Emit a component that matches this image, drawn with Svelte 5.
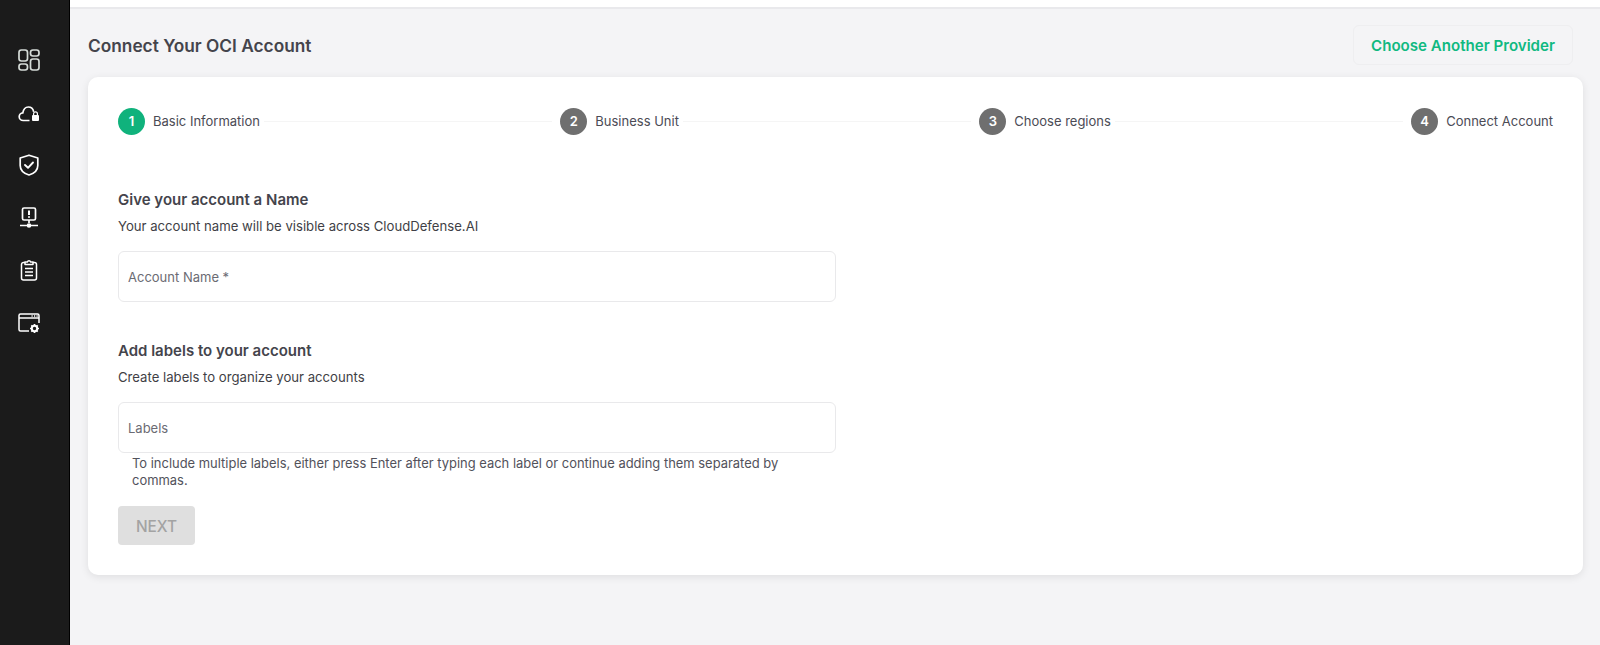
<script>
  const steps = [
    { n: 1, label: 'Basic Information', active: true },
    { n: 2, label: 'Business Unit' },
    { n: 3, label: 'Choose regions' },
    { n: 4, label: 'Connect Account' }
  ];
</script>

<div class="app">
  <nav class="rail">
    <svg class="ico" viewBox="0 0 22 22" fill="none" stroke="#d5dcd8" stroke-width="1.7">
      <rect x="1" y="1" width="8.5" height="11" rx="2.4" />
      <rect x="12.5" y="1" width="8.500" height="6" rx="2.400" />
      <rect x="1" y="15" width="8.500" height="6" rx="2.400" />
      <rect x="12.500" y="10" width="8.500" height="11" rx="2.400" />
    </svg>
    <svg class="ico" viewBox="0 0 22 22" fill="none" stroke="#fff" stroke-width="1.700">
      <path d="M11.500 18.500H5.200C3 18.500 1.200 16.800 1.200 14.700c0-2 1.600-3.700 3.600-3.800C5.400 7.600 7.600 5 10.300 5c2.600 0 4.800 1.800 5.400 4.800" />
      <rect x="14" y="13" width="7" height="6" rx="1" fill="#fff" stroke="none" />
      <path d="M15.600 13v-1.200a1.900 1.900 0 0 1 3.800 0V13" stroke-width="1.200" />
    </svg>
    <svg class="ico" viewBox="0 0 22 22" fill="none" stroke="#fff" stroke-width="1.700">
      <path d="M11 1.200 19.800 4v7.500c0 4.800-3.800 8-8.800 9.500-5-1.500-8.800-4.700-8.800-9.500V4z" stroke-linejoin="round" />
      <path d="M7 11l3 2.800 5-5.300" stroke-width="1.900" stroke-linecap="round" stroke-linejoin="round" />
    </svg>
    <svg class="ico" viewBox="0 0 22 22" fill="none" stroke="#fff" stroke-width="1.700">
      <rect x="4.500" y="1" width="13" height="12" rx="1.500" />
      <path d="M11 3.500v4.500M11 9.300v1.500" stroke-width="2" />
      <path d="M11 13v3M2 18.500h18" />
      <circle cx="11" cy="18.500" r="2.300" fill="#fff" stroke="none" />
    </svg>
    <svg class="ico" viewBox="0 0 22 22" fill="none" stroke="#fff" stroke-width="1.500">
      <path d="M7 3.500H5.500a2 2 0 0 0-2 2V19a2 2 0 0 0 2 2h11a2 2 0 0 0 2-2V5.500a2 2 0 0 0-2-2H15" />
      <path d="M7 5.500V3h2.300a1.800 1.800 0 0 1 3.400 0H15v2.500z" stroke-linejoin="round" />
      <path d="M7 9.500h8M7 13h8M7 16.500h8" />
    </svg>
    <svg class="ico" viewBox="0 0 22 22" fill="none" stroke="#fff" stroke-width="1.500">
      <path d="M11 19H2.500A1.500 1.500 0 0 1 1 17.500v-14A1.500 1.500 0 0 1 2.500 2h17A1.500 1.500 0 0 1 21 3.500V11" />
      <path d="M1 6h20" />
      <path d="M13.500 4h1.200M16 4h1.200M18.500 4h1.200" stroke-width="1.300" />
      <circle cx="16.500" cy="16.500" r="2.700" stroke-width="2" />
      <path d="M16.500 12v1.500M16.500 19.500V21M12 16.500h1.500M19.500 16.500H21M13.300 13.300l1.100 1.100M18.600 18.600l1.100 1.100M13.300 19.700l1.100-1.100M18.600 14.400l1.100-1.100" stroke-width="1.700" />
    </svg>
  </nav>

  <div class="body">
    <div class="topbar"></div>
    <main class="main">
      <header class="head">
        <h1>Connect Your OCI Account</h1>
        <button class="provider">Choose Another Provider</button>
      </header>

      <section class="card">
        <ol class="stepper">
          {#each steps as s, i}
            {#if i > 0}<li class="line" aria-hidden="true"></li>{/if}
            <li class="step">
              <span class="dot" class:active={s.active}>{s.n}</span>
              <span class="step-label">{s.label}</span>
            </li>
          {/each}
        </ol>

        <h2 class="first">Give your account a Name</h2>
        <p class="sub">Your account name will be visible across CloudDefense.AI</p>
        <input class="field" placeholder="Account Name *" />

        <h2 class="second">Add labels to your account</h2>
        <p class="sub">Create labels to organize your accounts</p>
        <input class="field" placeholder="Labels" />
        <p class="help">To include multiple labels, either press Enter after typing each label or continue adding them separated by commas.</p>

        <button class="next" disabled>NEXT</button>
      </section>
    </main>
  </div>
</div>

<style>
  :global(body) {
    margin: 0;
    font-family: Inter, "Noto Sans", sans-serif;
    background: #f4f4f6;
  }
  .app {
    display: flex;
    height: 645px;
    overflow: hidden;
  }
  .rail {
    width: 70px;
    flex: none;
    background: #1b1b1b;
    border-right: 1px solid #000;
    display: flex;
    flex-direction: column;
    align-items: flex-start;
    gap: 30.6px;
    padding: 49px 0 0 18px;
    box-sizing: border-box;
  }
  .ico {
    width: 22px;
    height: 22px;
    display: block;
  }
  .body {
    flex: 1;
    min-width: 0;
  }
  .topbar {
    height: 7px;
    background: #fff;
    border-bottom: 2px solid #e9e9ec;
  }
  .main {
    padding: 16px 17px 0 18px;
  }
  .head {
    display: flex;
    justify-content: space-between;
    align-items: center;
    padding-right: 10px;
    margin-bottom: 12px;
  }
  h1 {
    margin: 0;
    font-size: 17.3px;
    font-weight: 600;
    color: #44444c;
  }
  .provider {
    width: 220px;
    height: 40px;
    background: transparent;
    border: 1px solid #eeeef0;
    border-radius: 6px;
    color: #10b981;
    font: 600 15.1px Inter, sans-serif;
    padding: 0;
  }
  .card {
    background: #fff;
    border-radius: 10px;
    box-shadow: 0 2px 8px rgba(0, 0, 0, 0.09);
    height: 498px;
    padding: 30px 30px 0;
    box-sizing: border-box;
  }
  .stepper {
    list-style: none;
    margin: 0;
    padding: 0;
    display: flex;
    align-items: center;
    height: 28px;
  }
  .step {
    display: flex;
    align-items: center;
    gap: 8px;
  }
  .line {
    flex: 1;
    height: 1px;
    background: #f5f5f5;
    margin: 0 8px 0 4px;
  }
  .dot {
    width: 27px;
    height: 27px;
    border-radius: 50%;
    background: #6f6f6f;
    color: #fff;
    font-size: 13px;
    font-weight: 600;
    display: flex;
    align-items: center;
    justify-content: center;
  }
  .dot.active {
    background: #10b27c;
  }
  .step-label {
    font-size: 13px;
    color: #4b4b55;
  }
  h2 {
    margin: 0;
    font-size: 15px;
    font-weight: 600;
    color: #44444c;
    line-height: 20px;
  }
  h2.first {
    margin-top: 55px;
  }
  h2.second {
    margin-top: 39px;
  }
  .sub {
    margin: 7px 0 16px;
    font-size: 13.15px;
    line-height: 18px;
    color: #3f3f46;
  }
  .field {
    display: block;
    width: 718px;
    height: 51px;
    box-sizing: border-box;
    border: 1px solid #e9e9eb;
    border-radius: 6px;
    padding: 0 9px;
    font: 13px Inter, sans-serif;
    outline: none;
  }
  .field::placeholder {
    color: #6b6b73;
    opacity: 1;
  }
  .help {
    margin: 2px 0 0 14px;
    width: 660px;
    font-size: 12.95px;
    line-height: 17px;
    color: #52525b;
  }
  .next {
    display: block;
    margin-top: 17px;
    width: 77px;
    height: 39px;
    border: none;
    border-radius: 4px;
    background: #dfdfdf;
    color: #a3a3a3;
    font: 500 15.4px Inter, sans-serif;
    padding: 1px 0 0;
  }
</style>
